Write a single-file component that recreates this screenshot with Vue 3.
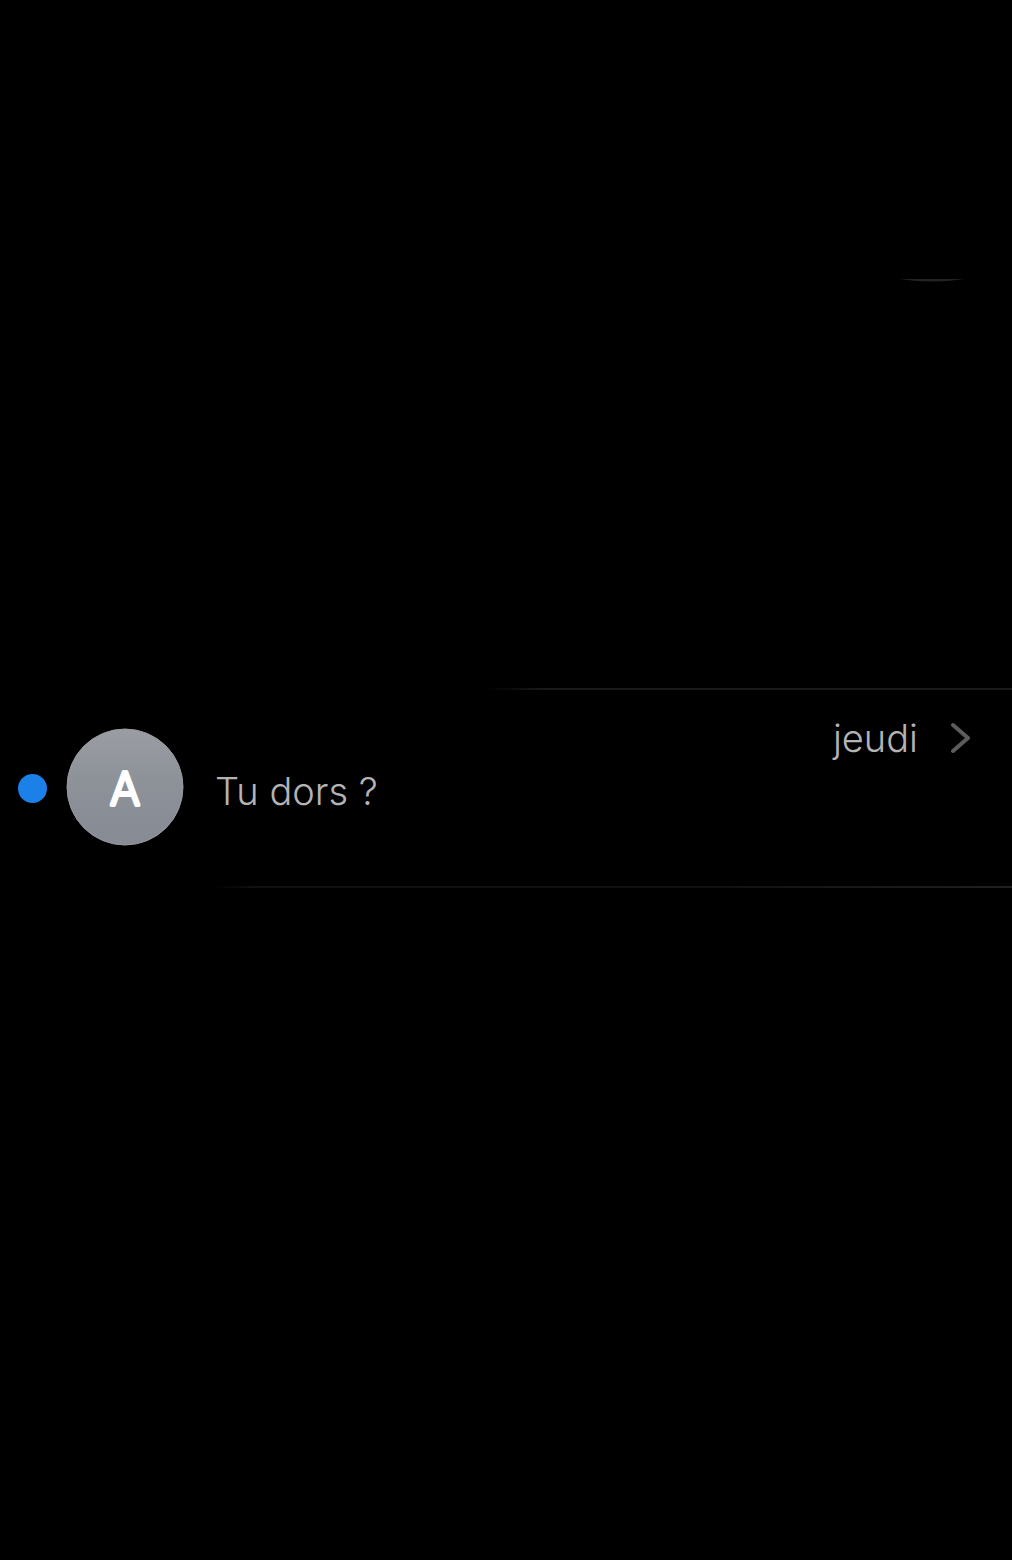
<script setup>
const conversations = [
  { id: 1, initial: 'A', preview: 'Tu dors ?', date: 'jeudi', unread: true },
]
</script>

<template>
  <main class="messages">
    <header class="messages__header">
      <svg class="messages__edge" viewBox="0 0 68 4" aria-hidden="true">
        <path d="M2 0H66Q34 5 2 0Z" fill="#242424" />
      </svg>
    </header>

    <a
      v-for="conversation in conversations"
      :key="conversation.id"
      class="conversation"
      href="#"
    >
      <span class="conversation__dot" :class="{ 'conversation__dot--unread': conversation.unread }" />
      <svg class="conversation__avatar" viewBox="0 0 118 118">
        <defs>
          <linearGradient id="avatar-fill" x1="0" y1="0" x2="0" y2="1">
            <stop offset="0" stop-color="#9b9da4" />
            <stop offset="0.4" stop-color="#8e9299" />
            <stop offset="1" stop-color="#868b94" />
          </linearGradient>
        </defs>
        <circle cx="59" cy="59" r="58" fill="url(#avatar-fill)" stroke="#999a9e" />
        <text class="conversation__initial" x="59" y="77" text-anchor="middle">
          {{ conversation.initial }}
        </text>
      </svg>
      <span class="conversation__preview">{{ conversation.preview }}</span>
      <span class="conversation__meta">
        <span class="conversation__date">{{ conversation.date }}</span>
        <svg class="conversation__chevron" viewBox="0 0 20 32" aria-hidden="true">
          <path
            d="M3 3L18 16L3 29"
            fill="none"
            stroke="#5c5c5c"
            stroke-width="4"
            stroke-linecap="round"
            stroke-linejoin="round"
          />
        </svg>
      </span>
    </a>
  </main>
</template>

<style>
body {
  background: #000;
}
</style>

<style scoped>
.messages {
  min-height: 100vh;
  background: #000;
  font-family: Inter, "Liberation Sans", sans-serif;
}

.messages__header {
  display: flex;
  justify-content: flex-end;
  padding: 279px 46px 405px;
}

.messages__edge {
  width: 68px;
  height: 4px;
}

.conversation {
  display: grid;
  grid-template-columns: 29px 118px 1fr auto;
  align-items: center;
  padding: 40px 42px 42px 18px;
  background:
    linear-gradient(90deg, transparent 48%, #1a1a1a 54%, #1a1a1a) top / 100% 2px no-repeat,
    linear-gradient(90deg, transparent 21%, #101010 25%, #101010 70%, #202020) bottom / 100% 2px no-repeat;
  color: #b4b4b4;
  font-size: 38px;
  font-weight: 300;
  line-height: 48px;
  text-decoration: none;
}

.conversation__dot {
  width: 29px;
  height: 29px;
  margin-top: 2px;
  border-radius: 50%;
}

.conversation__dot--unread {
  background: #1b80e8;
}

.conversation__avatar {
  width: 118px;
  height: 118px;
  margin-left: 19px;
}

.conversation__initial {
  fill: #fff;
  stroke: #fff;
  stroke-width: 4px;
  stroke-linejoin: round;
  font-size: 45px;
  font-weight: 200;
}

.conversation__preview {
  padding: 8px 0 0 50px;
}

.conversation__meta {
  display: flex;
  align-items: center;
  align-self: start;
  gap: 32px;
  margin-top: -14px;
}

.conversation__chevron {
  width: 20px;
  height: 32px;
}
</style>
